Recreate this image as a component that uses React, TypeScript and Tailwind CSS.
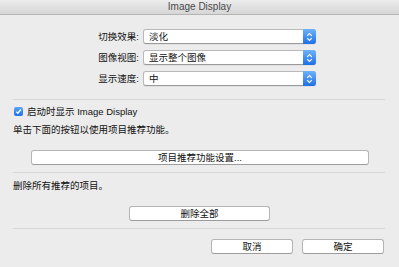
import React from 'react'

const font = { fontFamily: '"Liberation Sans", "Noto Sans CJK SC", sans-serif' }

function Select({ value }: { value: string }) {
  return (
    <div className="flex h-[15px] w-[173px] items-stretch rounded-[3px] border border-[#b9b9b9] border-b-[#9a9a9a] bg-white shadow-[0_1px_0_rgba(0,0,0,0.05)]">
      <div className="flex flex-1 items-center pl-[5px] text-[9.5px] leading-none text-[#111]">{value}</div>
      <div className="-my-px -mr-px flex w-[13px] items-center justify-center rounded-r-[3px] bg-gradient-to-b from-[#6cb3fa] to-[#1e6fe6]">
        <svg width="7" height="10" viewBox="0 0 7 10" fill="none">
          <path d="M1.2 3.8 3.5 1.6 5.8 3.8" stroke="white" strokeWidth="1.1" />
          <path d="M1.2 6.2 3.5 8.4 5.8 6.2" stroke="white" strokeWidth="1.1" />
        </svg>
      </div>
    </div>
  )
}

function Button({ label, className }: { label: string; className: string }) {
  return (
    <div
      className={`flex h-[15px] items-center justify-center rounded-[3px] border border-[#b4b4b4] border-b-[#9c9c9c] bg-white text-[9.5px] leading-none text-[#111] ${className}`}
    >
      {label}
    </div>
  )
}

function Row({ label, value, className = '' }: { label: string; value: string; className?: string }) {
  return (
    <div className={`flex items-center ${className}`}>
      <div className="w-[130px] pr-[4px] text-right text-[9.5px] leading-none text-[#111]">{label}</div>
      <Select value={value} />
    </div>
  )
}

export default function App() {
  return (
    <div className="h-[267px] w-[399px] overflow-hidden bg-[#ececec]" style={font}>
      <div className="flex h-[15px] items-center justify-center border-b border-[#b5b5b5] bg-gradient-to-b from-[#ececec] to-[#d6d6d6] text-[10px] leading-none text-[#4a4a4a]">
        Image Display
      </div>

      <div className="px-[13px] pr-[14px]">
        <Row label="切换效果:" value="淡化" className="mt-[14px]" />
        <Row label="图像视图:" value="显示整个图像" className="mt-[6px]" />
        <Row label="显示速度:" value="中" className="mt-[6px]" />

        <div className="mt-[13px] h-px bg-[#d6d6d6]" />

        <div className="mt-[7px] flex h-[9px] items-center pl-px">
          <div className="flex h-[9px] w-[9px] items-center justify-center rounded-[2px] bg-gradient-to-b from-[#5aa6fa] to-[#1f70e6]">
            <svg width="7" height="7" viewBox="0 0 7 7" fill="none">
              <path d="M1.2 3.6 2.8 5.2 5.9 1.5" stroke="white" strokeWidth="1.3" />
            </svg>
          </div>
          <span className="ml-[4px] text-[9.5px] leading-none text-[#111]">启动时显示 Image Display</span>
        </div>

        <div className="mt-[9px] text-[9.5px] leading-[10px] text-[#111]">单击下面的按钮以使用项目推荐功能。</div>

        <div className="mt-[15px] flex">
          <Button label="项目推荐功能设置..." className="ml-[18px] w-[338px]" />
        </div>

        <div className="mt-[7px] h-px bg-[#d6d6d6]" />

        <div className="mt-[8px] text-[9.5px] leading-[10px] text-[#111]">删除所有推荐的项目。</div>

        <div className="mt-[15px] flex">
          <Button label="删除全部" className="ml-[116px] w-[141px]" />
        </div>

        <div className="mt-[7px] h-px bg-[#d6d6d6]" />

        <div className="mt-[10px] flex justify-end gap-[9px] pr-px">
          <Button label="取消" className="w-[82px]" />
          <Button label="确定" className="w-[82px]" />
        </div>
      </div>
    </div>
  )
}
